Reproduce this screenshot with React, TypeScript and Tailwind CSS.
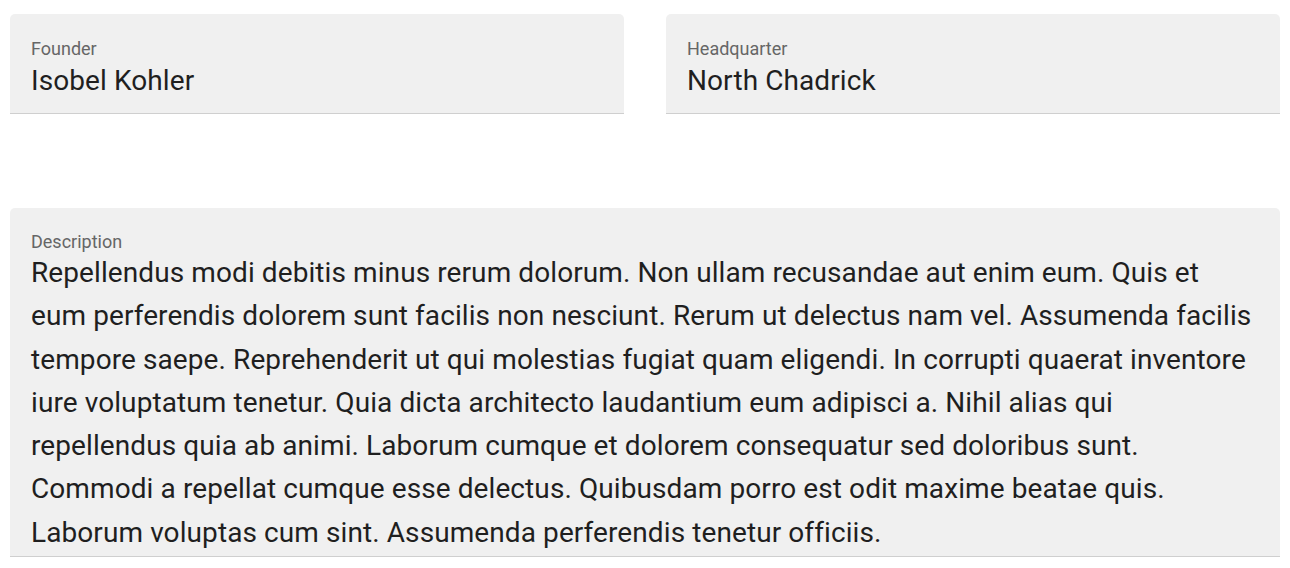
function Field({ label, value }: { label: string; value: string }) {
  return (
    <div className="flex flex-col rounded-t-[5px] border-b border-[#cfcfcf] bg-[#f0f0f0] px-[21px] pt-[26px] pb-[19px]">
      <span className="text-[18px] leading-[18px] text-[#666666]">{label}</span>
      <span className="mt-[10px] text-[28px] leading-[26px] tracking-[0.09px] text-[#1f1f1f]">{value}</span>
    </div>
  )
}

const description =
  'Repellendus modi debitis minus rerum dolorum. Non ullam recusandae aut enim eum. Quis et eum perferendis dolorem sunt facilis non nesciunt. Rerum ut delectus nam vel. Assumenda facilis tempore saepe. Reprehenderit ut qui molestias fugiat quam eligendi. In corrupti quaerat inventore iure voluptatum tenetur. Quia dicta architecto laudantium eum adipisci a. Nihil alias qui repellendus quia ab animi. Laborum cumque et dolorem consequatur sed doloribus sunt. Commodi a repellat cumque esse delectus. Quibusdam porro est odit maxime beatae quis. Laborum voluptas cum sint. Assumenda perferendis tenetur officiis.'

export default function App() {
  return (
    <div className="min-h-screen bg-white px-[10px] pt-[14px]" style={{ fontFamily: 'Roboto, "Liberation Sans", sans-serif' }}>
      {/* Top row */}
      <div className="grid grid-cols-2 gap-[42px]">
        <Field label="Founder" value="Isobel Kohler" />
        <Field label="Headquarter" value="North Chadrick" />
      </div>

      {/* Description */}
      <div className="mt-[94px] flex flex-col rounded-t-[5px] border-b border-[#cfcfcf] bg-[#f0f0f0] pl-[21px] pr-[25px] pt-[25px] pb-[2px]">
        <span className="text-[18px] leading-[18px] text-[#666666]">Description</span>
        <p className="text-[28px] leading-[43.3px] tracking-[0.09px] text-[#1f1f1f]">{description}</p>
      </div>
    </div>
  )
}
